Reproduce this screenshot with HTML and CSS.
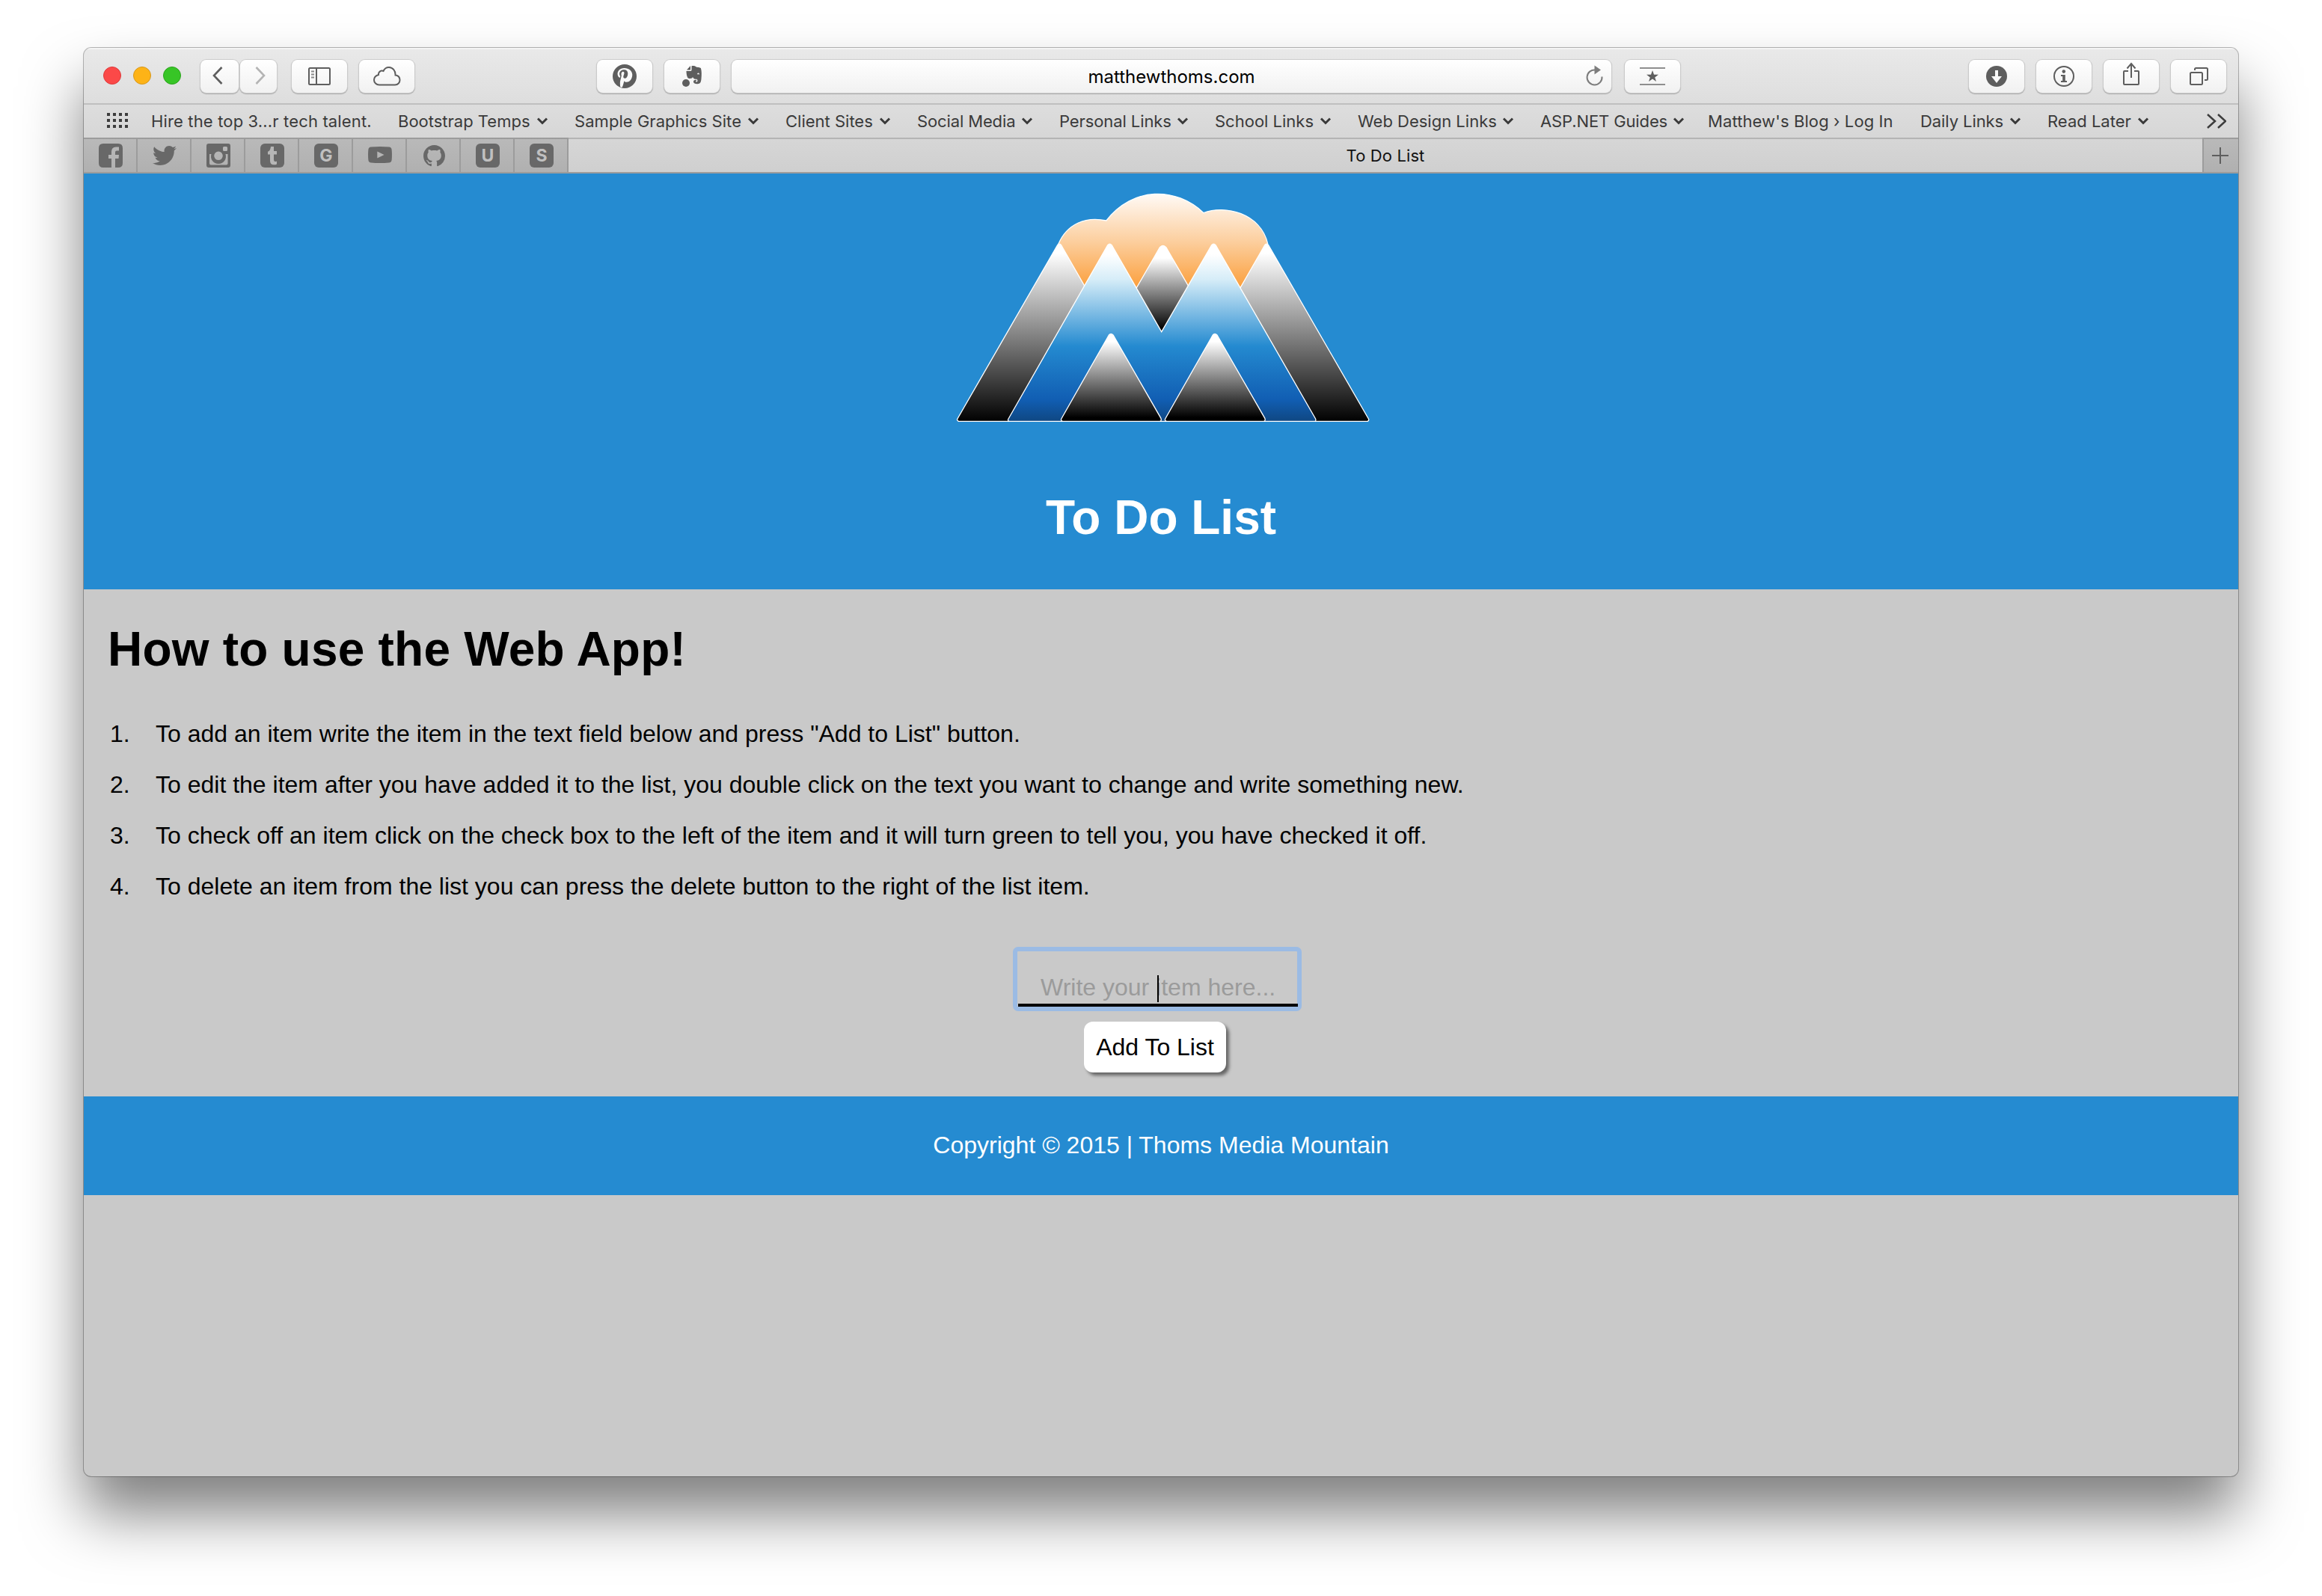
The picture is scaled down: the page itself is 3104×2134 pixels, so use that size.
FILE: index.html
```
<!DOCTYPE html>
<html lang="en">
<head>
<meta charset="utf-8">
<title>To Do List</title>
<link rel="stylesheet" href="styles.css">
</head>
<body>
<div class="window">
  <div class="chrome">
    <div class="toolbar">
      <div class="lights"><i class="light red"></i><i class="light amber"></i><i class="light green"></i></div>
      <div class="btn nav back"><svg width="14" height="24" viewBox="0 0 14 24"><path d="M12.500 1L2 12L12.500 23" fill="none" stroke="#5e5e5e" stroke-width="2.600"/></svg></div>
      <div class="btn nav fwd"><svg width="14" height="24" viewBox="0 0 14 24"><path d="M1.500 1L12 12L1.500 23" fill="none" stroke="#b4b4b4" stroke-width="2.600"/></svg></div>
      <div class="btn side"><svg width="30" height="24" viewBox="0 0 30 24" fill="none" stroke="#5e5e5e" stroke-width="2"><rect x="1" y="1" width="28" height="22" rx="1.500"/><path d="M11 1V23"/><path d="M4 5.500H8M4 9.500H8M4 13.500H8" stroke="#8a8a8a"/></svg></div>
      <div class="btn"><svg width="38" height="28" viewBox="0 0 38 28"><path d="M9 25.500H30C34 25.500 36.500 22.500 36.500 19C36.500 15.500 34 13 30.500 12.500C31 7 27 2 22 2C18.500 2 15.800 4 14.500 7C11 5.500 7.500 8.500 8 12C4.500 13 2 15.500 2 19C2 22.500 5 25.500 9 25.500Z" fill="none" stroke="#5e5e5e" stroke-width="2"/></svg></div>
      <div class="btn pin"><svg width="32" height="32" viewBox="0 0 24 24"><circle cx="12" cy="12" r="12" fill="#5e5e5e"/><path d="M12.200 4.300C7.800 4.300 5.500 7.300 5.500 10.200C5.500 11.800 6.200 13.400 7.500 14C7.800 14.100 8 14 8 13.700L8.200 12.800C8.300 12.500 8.200 12.400 8 12.100C7.600 11.600 7.400 11 7.400 10.200C7.400 8 9.100 6 11.900 6C14.300 6 15.800 7.500 15.800 9.700C15.800 12.400 14.600 14.600 12.800 14.600C11.800 14.600 11.100 13.800 11.300 12.800C11.600 11.600 12.200 10.300 12.200 9.400C12.200 8.600 11.800 8 11 8C10 8 9.200 9 9.200 10.400C9.200 11.300 9.500 11.900 9.500 11.900L8.200 17.300C7.800 19 8.100 21.200 8.200 23.200L10 23.900C10.700 22.500 11.200 21 11.500 19.800L12.100 17.300C12.500 18 13.500 18.500 14.600 18.500C18 18.500 20.300 15.100 20.300 11C20.300 7.300 16.900 4.300 12.200 4.300Z" transform="translate(-.6 -.6)" fill="#fafafa"/></svg></div>
      <div class="btn ever"><svg width="28" height="30" viewBox="0 0 28 30" fill="#5e5e5e"><circle cx="6" cy="24" r="5"/><path d="M12 1L7 6.500H11.500Q12 6.500 12 6ZM13.500 1.200V6.500Q13.500 8 12 8H6.500C6.500 12 7.500 16.500 9 17.500C11 18.500 13 18 14 17.600C14.500 17 14.800 16.500 15 16C16 18.500 18 19 20 18.800C21.200 18.800 21.500 20 21.400 21.500C21.300 22.500 20 22.800 19.300 22.200C18.800 21.500 19.500 20.500 20.200 20.500V19.800C17.500 19.500 15.800 20.500 16 22.500C16.200 24.500 18.500 25.400 21.500 25.200C25 25 26.200 23 26.500 18C27 13 27 8 26 4.500C25.500 3 22.500 3 20 2.700C18.500 1 16 .5 13.500 1.200ZM22.500 10.500C23.500 10.500 24 11.500 24 12.800C23 12.200 22 12.200 21 12.400C21.200 11.200 21.700 10.500 22.500 10.500Z" fill-rule="evenodd"/></svg></div>
      <div class="btn url"><span>matthewthoms.com</span><svg class="reload" width="24" height="28" viewBox="0 0 24 28"><path d="M13 6.500A10 10 0 1 0 21.500 15.500" fill="none" stroke="#7d7d7d" stroke-width="2"/><path d="M11.500 .5L20 6.500L11.500 12.500Z" fill="#7d7d7d"/></svg></div>
      <div class="btn star"><svg width="34" height="26" viewBox="0 0 34 26"><path d="M0 2H34M0 24H34" stroke="#8e8e8e" stroke-width="2"/><path d="M17 5L19 10.800H25L20.200 14.400L22 20L17 16.600L12 20L13.800 14.400L9 10.800H15Z" fill="#5e5e5e"/></svg></div>
      <div class="btn dl"><svg width="28" height="28" viewBox="0 0 28 28"><circle cx="14" cy="14" r="14" fill="#5e5e5e"/><path d="M12 6H16V14H21L14 23L7 14H12Z" fill="#fafafa"/></svg></div>
      <div class="btn"><svg width="28" height="28" viewBox="0 0 28 28"><circle cx="14" cy="14" r="13" fill="none" stroke="#5e5e5e" stroke-width="2"/><circle cx="13.800" cy="7.600" r="2.300" fill="#5e5e5e"/><path d="M10 12H15.800V20H18V22H10V20H12.200V14H10Z" fill="#5e5e5e"/></svg></div>
      <div class="btn"><svg class="share" width="24" height="32" viewBox="0 0 24 32" fill="none" stroke="#5e5e5e" stroke-width="2"><path d="M8 12H3Q2 12 2 13V29Q2 30 3 30H21Q22 30 22 29V13Q22 12 21 12H16M12 21V3M6.500 8.500L12 2L17.500 8.500"/></svg></div>
      <div class="btn"><svg width="26" height="24" viewBox="0 0 26 24" fill="none" stroke="#5e5e5e" stroke-width="2"><rect x="2" y="7" width="16" height="16" rx="1.500"/><path d="M8 4V2.500Q8 1 9.500 1H23.500Q25 1 25 2.500V15.500Q25 17 23.500 17H21"/></svg></div>
    </div>
    <div class="bookmarks">
      <svg class="dots" width="28" height="20" viewBox="0 0 28 20"><path d="M0 2H28M0 10H28M0 18H28" stroke="#3d3d3d" stroke-width="4" stroke-dasharray="4 4"/></svg>
      <span class="bm hire"><span>Hire the top 3...r tech talent.</span></span>
      <span class="bm bootstrap"><span>Bootstrap Temps</span><svg class="chev" viewBox="0 0 14 10"><path d="M1 1.500L7 7.500L13 1.500"/></svg></span>
      <span class="bm graphics"><span>Sample Graphics Site</span><svg class="chev" viewBox="0 0 14 10"><path d="M1 1.500L7 7.500L13 1.500"/></svg></span>
      <span class="bm client"><span>Client Sites</span><svg class="chev" viewBox="0 0 14 10"><path d="M1 1.500L7 7.500L13 1.500"/></svg></span>
      <span class="bm social"><span>Social Media</span><svg class="chev" viewBox="0 0 14 10"><path d="M1 1.500L7 7.500L13 1.500"/></svg></span>
      <span class="bm personal"><span>Personal Links</span><svg class="chev" viewBox="0 0 14 10"><path d="M1 1.500L7 7.500L13 1.500"/></svg></span>
      <span class="bm school"><span>School Links</span><svg class="chev" viewBox="0 0 14 10"><path d="M1 1.500L7 7.500L13 1.500"/></svg></span>
      <span class="bm design"><span>Web Design Links</span><svg class="chev" viewBox="0 0 14 10"><path d="M1 1.500L7 7.500L13 1.500"/></svg></span>
      <span class="bm asp"><span>ASP.NET Guides</span><svg class="chev" viewBox="0 0 14 10"><path d="M1 1.500L7 7.500L13 1.500"/></svg></span>
      <span class="bm blog"><span>Matthew's Blog › Log In</span></span>
      <span class="bm daily"><span>Daily Links</span><svg class="chev" viewBox="0 0 14 10"><path d="M1 1.500L7 7.500L13 1.500"/></svg></span>
      <span class="bm later"><span>Read Later</span><svg class="chev" viewBox="0 0 14 10"><path d="M1 1.500L7 7.500L13 1.500"/></svg></span>
      <svg class="more" width="26" height="20" viewBox="0 0 26 20"><path d="M1 1L11 10L1 19M15 1L25 10L15 19" fill="none" stroke="#3d3d3d" stroke-width="2.500"/></svg>
    </div>
    <div class="tabs">
      <div class="pinned"><svg viewBox="0 0 32 32"><path d="M6 0H26Q32 0 32 6V26Q32 32 26 32H22V20H26.500L27 15H22V11.500Q22 9.500 24 9.500H27V4.500H23Q17 4.500 17 11V15H13V20H17V32H6Q0 32 0 26V6Q0 0 6 0Z"/></svg></div>
      <div class="pinned"><svg viewBox="0 0 24 24"><path d="M23.954 4.569c-.885.389-1.830.654-2.825.775 1.014-.611 1.794-1.574 2.163-2.723-.951.555-2.005.959-3.127 1.184-.896-.959-2.173-1.559-3.591-1.559-2.717 0-4.920 2.203-4.920 4.917 0 .390.045.765.127 1.124C7.691 8.094 4.066 6.130 1.640 3.161c-.427.722-.666 1.561-.666 2.475 0 1.710.870 3.213 2.188 4.096-.807-.026-1.566-.248-2.228-.616v.061c0 2.385 1.693 4.374 3.946 4.827-.413.111-.849.171-1.296.171-.314 0-.615-.030-.916-.086.631 1.953 2.445 3.377 4.604 3.417-1.680 1.319-3.809 2.105-6.102 2.105-.390 0-.779-.023-1.170-.067 2.189 1.394 4.768 2.209 7.557 2.209 9.054 0 13.999-7.496 13.999-13.986 0-.209 0-.420-.015-.630.961-.689 1.800-1.560 2.460-2.548z"/></svg></div>
      <div class="pinned"><svg viewBox="0 0 32 32"><path fill-rule="evenodd" d="M3 0H29Q32 0 32 3V29Q32 32 29 32H3Q0 32 0 29V3Q0 0 3 0ZM23.500 4Q22 4 22 5.500V8.500Q22 10 23.500 10H26.500Q28 10 28 8.500V5.500Q28 4 26.500 4ZM4 14V26.500Q4 28.500 6 28.500H26.500Q28.500 28.500 28.500 26.500V14H25.500A10 10 0 1 1 6.500 14ZM16 10.500A5.800 5.800 0 1 0 16 22.100A5.800 5.800 0 1 0 16 10.500Z"/></svg></div>
      <div class="pinned"><svg viewBox="0 0 32 32"><rect width="32" height="32" rx="6"/><path fill="#b6b6b6" d="M14 4H18V10H22V14.500H18V21.500Q18 24 20 24Q21 24 22 23.400V27.400Q20.500 28.300 18 28.300Q13 28.300 13 23V14.500H10V10.800Q13.500 9.500 14 4Z"/></svg></div>
      <div class="pinned"><span class="letter">G</span></div>
      <div class="pinned"><svg viewBox="0 0 32 32"><path fill-rule="evenodd" d="M4 4.500Q16 3.300 28 4.500Q31.200 4.800 31.600 8Q32.300 15 31.600 22Q31.200 25.300 28 25.600Q16 26.600 4 25.600Q.8 25.300 .4 22Q-.3 15 .4 8Q.8 4.800 4 4.500ZM12.300 10.500V19.500L21.500 15Z"/></svg></div>
      <div class="pinned"><svg class="gh" viewBox="0 0 16 16"><path d="M8 0C3.580 0 0 3.580 0 8c0 3.540 2.290 6.530 5.470 7.590.4.070.55-.17.55-.38 0-.19-.01-.82-.01-1.490-2.010.37-2.530-.49-2.690-.94-.09-.23-.48-.94-.82-1.130-.28-.15-.68-.52-.01-.53.63-.01 1.080.58 1.230.82.72 1.210 1.870.87 2.330.66.07-.52.28-.87.51-1.070-1.780-.2-3.640-.89-3.640-3.950 0-.87.31-1.590.82-2.150-.08-.2-.36-1.020.08-2.120 0 0 .67-.21 2.200.82.64-.18 1.320-.27 2-.27s1.360.09 2 .27c1.530-1.040 2.200-.82 2.200-.82.44 1.100.16 1.920.08 2.120.51.56.82 1.270.82 2.150 0 3.070-1.870 3.750-3.650 3.950.29.25.54.73.54 1.480 0 1.070-.01 1.930-.01 2.200 0 .21.15.46.55.38A8.010 8.010 0 0 0 16 8c0-4.420-3.580-8-8-8z"/></svg></div>
      <div class="pinned"><span class="letter">U</span></div>
      <div class="pinned"><span class="letter">S</span></div>
      <div class="tab">To Do List</div>
      <div class="newtab"><svg width="22" height="22" viewBox="0 0 22 22"><path d="M11 0V22M0 11H22" stroke="#5e5e5e" stroke-width="2"/></svg></div>
    </div>
  </div>
  <header class="masthead">
    <svg class="logo" viewBox="-41.8 0 1609.8 1050" preserveAspectRatio="none">
      <defs>
        <linearGradient id="cloud" gradientUnits="userSpaceOnUse" x1="0" y1="58" x2="0" y2="435"><stop offset="0" stop-color="#fffaf6"/><stop offset=".5" stop-color="#fccf9f"/><stop offset="1" stop-color="#fb9f3c"/></linearGradient>
        <linearGradient id="slope" gradientUnits="userSpaceOnUse" x1="0" y1="295" x2="0" y2="960"><stop offset="0" stop-color="#fff"/><stop offset="1" stop-color="#050505"/></linearGradient>
        <linearGradient id="peak" gradientUnits="userSpaceOnUse" x1="0" y1="315" x2="0" y2="602"><stop offset="0" stop-color="#fff"/><stop offset="1" stop-color="#000"/></linearGradient>
        <linearGradient id="hill" gradientUnits="userSpaceOnUse" x1="0" y1="650" x2="0" y2="955"><stop offset="0" stop-color="#fff"/><stop offset="1" stop-color="#000"/></linearGradient>
        <linearGradient id="blue" gradientUnits="userSpaceOnUse" x1="0" y1="300" x2="0" y2="970"><stop offset="0" stop-color="#fff"/><stop offset=".15" stop-color="#d6edf8"/><stop offset=".55" stop-color="#248ad0"/><stop offset=".87" stop-color="#115eb3"/><stop offset="1" stop-color="#0f4782"/></linearGradient>
      </defs>
      <g class="shapes">
        <path fill="url(#cloud)" d="M405 258C435 178 500 147 572 165C665 28 815 28 912 134C985 100 1112 135 1136 258L1040 450H480Z"/>
        <path fill="url(#slope)" d="M402 262Q408 254 415 264L495 425V600L300 970H56Q49 966 52 960Z"/>
        <path fill="url(#slope)" d="M1138 262Q1132 254 1125 264L1040 435V600L1240 970H1485Q1491 966 1488 960Z"/>
        <path fill="url(#peak)" d="M759 272Q770 258 781 272L870 450L765 612L670 450Z"/>
        <path fill="url(#blue)" d="M577 263Q584 254 591 263L765 611L940 263Q947 254 954 263L1303 960Q1306 970 1298 970H234Q226 968 230 960Z"/>
        <path fill="url(#hill)" d="M581 624Q588 614 596 624L763 958Q766 970 758 970H420Q412 968 415 960Z"/>
        <path fill="url(#hill)" d="M944 624Q951 614 959 624L1126 958Q1129 970 1121 970H783Q775 968 778 960Z"/>
      </g>
    </svg>
    <h1 class="title">To Do List</h1>
  </header>
  <main class="content">
    <h1 class="howto">How to use the Web App!</h1>
    <ol class="steps">
      <li>To add an item write the item in the text field below and press "Add to List" button.</li>
      <li>To edit the item after you have added it to the list, you double click on the text you want to change and write something new.</li>
      <li>To check off an item click on the check box to the left of the item and it will turn green to tell you, you have checked it off.</li>
      <li>To delete an item from the list you can press the delete button to the right of the list item.</li>
    </ol>
    <div class="entry">Write your item here...<i class="caret"></i></div>
    <button class="add">Add To List</button>
  </main>
  <footer class="foot">Copyright © 2015 | Thoms Media Mountain</footer>
</div>
</body>
</html>
```
FILE: styles.css
```
* { box-sizing: border-box; }
body {
  margin: 0;
  padding: 64px 112px 0;
  height: 2134px;
  overflow: hidden;
  background: #fff;
  font-family: "Liberation Sans", Arial, sans-serif;
}
svg { display: block; flex: none; }

.window {
  display: flex;
  flex-direction: column;
  width: 2880px;
  height: 1910px;
  overflow: hidden;
  border-radius: 10px;
  background: #c9c9c9;
  box-shadow: 0 0 0 1px rgba(0, 0, 0, .28), 0 50px 80px rgba(0, 0, 0, .5);
}

/* Browser chrome */
.chrome {
  height: 168px;
  flex: none;
  background: linear-gradient(#e9e9e9, #cfcfcf);
  font-family: Inter, "Noto Sans", sans-serif;
}
.toolbar {
  display: flex;
  align-items: flex-start;
  height: 76px;
  padding: 16px 16px 0 26px;
  border-bottom: 2px solid #bfbfbf;
  box-shadow: inset 0 2px 0 #f4f4f4;
}
.lights { display: flex; gap: 16px; margin: 9px 26px 0 0; }
.light { width: 24px; height: 24px; border-radius: 50%; }
.red { background: #fb4948; border: 1px solid #de3a3b; }
.amber { background: #fdb317; border: 1px solid #d6971d; }
.green { background: #37c526; border: 1px solid #2ba31c; }
.btn {
  display: flex;
  align-items: center;
  justify-content: center;
  width: 74px;
  height: 44px;
  margin-right: 16px;
  border-radius: 8px;
  background: linear-gradient(#fff, #f1f1f1);
  box-shadow: 0 0 0 1px #cbcbcb, 0 1px 1px 1px #a9a9a9;
}
.nav { width: 50px; padding-bottom: 2px; }
.back { width: 51px; margin-right: 2px; padding-right: 5px; }
.fwd { width: 49px; margin-right: 20px; padding-left: 4px; }
.pin { margin-left: 228px; }
.url { position: relative; width: 1176px; margin-right: 18px; font-size: 24px; color: #000; }
.reload { position: absolute; right: 10px; top: 7px; }
.dl { margin-left: auto; }
.btn:last-child { margin-right: 0; }
.share { margin-top: -6px; }

.bookmarks {
  display: flex;
  align-items: center;
  gap: 36px;
  height: 46px;
  padding: 0 16px 0 31px;
  border-bottom: 2px solid #b4b4b4;
  font-size: 22px;
  color: #3a3a3a;
  white-space: nowrap;
}
.dots { margin: -2px -5px 0 0; }
.bm { display: flex; align-items: center; justify-content: space-between; flex: none; }
.hire { width: 294px; letter-spacing: .15px; }
.bootstrap { width: 200px; }
.graphics { width: 246px; letter-spacing: .05px; }
.client { width: 140px; }
.social { width: 154px; letter-spacing: -.13px; }
.personal { width: 172px; letter-spacing: -.1px; }
.school { width: 155px; }
.design { width: 208px; }
.asp { width: 192px; margin-right: -4px; letter-spacing: -.12px; }
.blog { width: 248px; letter-spacing: .1px; }
.daily { width: 134px; letter-spacing: -.08px; }
.later { width: 135px; }
.chev { width: 14px; height: 10px; fill: none; stroke: #3a3a3a; stroke-width: 3; overflow: visible; }
.more { margin-left: auto; }

.tabs { display: flex; height: 46px; border-bottom: 2px solid #9c9c9c; }
.pinned, .newtab {
  display: flex;
  align-items: center;
  justify-content: center;
  width: 72px;
  margin-top: -2px;
  padding-left: 2px;
  border-top: 2px solid #9c9c9c;
  border-right: 2px solid #9c9c9c;
  background: linear-gradient(#b9b9b9, #b0b0b0);
}
.pinned svg { width: 32px; height: 32px; fill: #686868; }
.pinned .gh { width: 29px; height: 29px; }
.letter {
  width: 32px;
  height: 32px;
  border-radius: 6px;
  background: #686868;
  color: #c0c0c0;
  font-size: 23px;
  font-weight: 700;
  line-height: 32px;
  text-align: center;
}
.tab { flex: 1; text-align: center; font-size: 22px; line-height: 44px; letter-spacing: .12px; color: #111; }
.newtab { width: 48px; padding: 0 2px 0 0; border-right: 0; border-left: 2px solid #9c9c9c; }

/* Page */
.masthead {
  display: flex;
  flex-direction: column;
  align-items: center;
  flex: none;
  height: 556px;
  padding-top: 8px;
  background: #258bd1;
  color: #fff;
}
.logo { width: 616px; height: 350px; }
.shapes path { stroke: #fff; stroke-width: 1.3px; vector-effect: non-scaling-stroke; }
.title, .howto { margin: 0; font-size: 64px; line-height: 74px; font-weight: 700; }
.title { margin-top: 65px; }
.howto { letter-spacing: .22px; }

.content {
  display: flex;
  flex-direction: column;
  flex: none;
  height: 678px;
  padding: 43px 32px 0;
  color: #000;
  font-size: 32px;
}
.steps {
  margin: 42px 0 0;
  padding: 0 0 0 3px;
  line-height: 68px;
  list-style: none;
  counter-reset: step;
}
.steps li { display: flex; counter-increment: step; }
.steps li::before { content: counter(step) "."; flex: none; width: 61px; }
.entry {
  position: relative;
  align-self: center;
  width: 386px;
  height: 86px;
  margin: 47px 0 0 -10px;
  padding: 30px 0 0 31px;
  border: 6px solid #9bbbe4;
  border-radius: 7px;
  line-height: 36px;
  color: #9b9b9b;
  white-space: nowrap;
}
.entry::after {
  content: "";
  position: absolute;
  left: 1px;
  right: -1px;
  bottom: 0;
  height: 4px;
  background: #000;
}
.caret { position: absolute; left: 187px; top: 32px; width: 2px; height: 36px; background: #000; }
.add {
  align-self: center;
  width: 190px;
  height: 68px;
  margin: 14px 0 0 -16px;
  padding: 0;
  border: 0;
  border-radius: 12px;
  background: #fff;
  box-shadow: 4px 4px 4px #666;
  color: #000;
  font: 32px "Liberation Sans", Arial, sans-serif;
}
.foot {
  flex: none;
  height: 132px;
  background: #258bd1;
  color: #fff;
  font-size: 32px;
  line-height: 130px;
  text-align: center;
}
```
